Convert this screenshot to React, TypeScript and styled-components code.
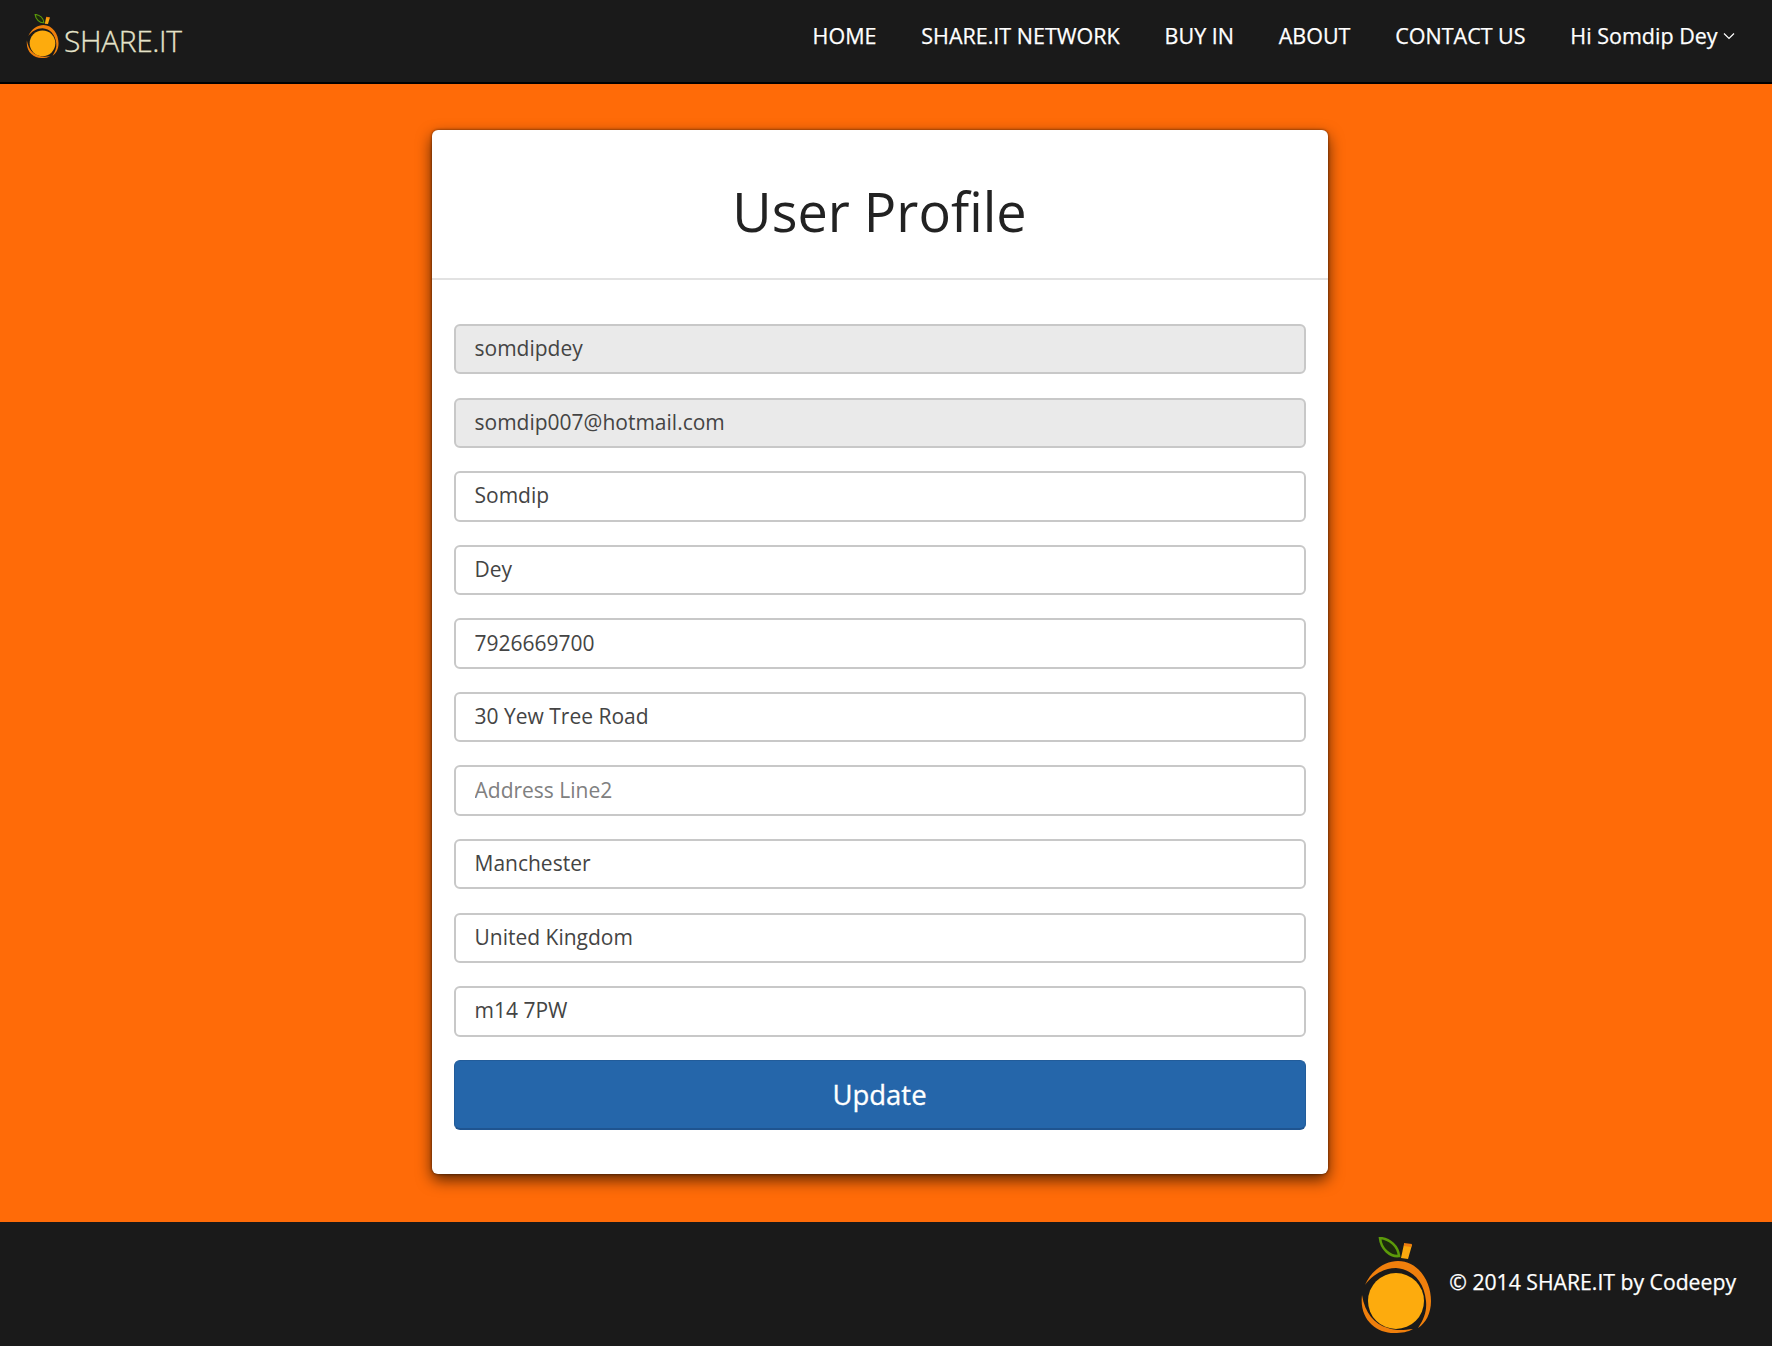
import styled, { createGlobalStyle } from "styled-components"

const GlobalStyle = createGlobalStyle`
	html, body {
		margin: 0;
		padding: 0;
		background: #ff6b08;
	}
	* {
		box-sizing: border-box;
	}
	body {
		font-family: "Open Sans", "Liberation Sans", sans-serif;
	}
`

const Page = styled.div`
	display: flex;
	flex-direction: column;
	width: 1772px;
	height: 1346px;
	overflow: hidden;
`

const TopBar = styled.header`
	display: flex;
	justify-content: space-between;
	flex: none;
	height: 84px;
	background: #1a1a1a;
	border-bottom: 2px solid #000;
	padding: 14px 15px 0 26px;
`

const Brand = styled.a`
	display: flex;
	align-items: flex-start;
	gap: 5px;
`

const BrandName = styled.span`
	font-weight: 300;
	font-size: 30px;
	line-height: 40px;
	margin-top: 7px;
	letter-spacing: -0.4px;
	-webkit-text-stroke: 0.3px #e5e3c9;
	color: #e5e3c9;
`

const Nav = styled.nav`
	display: flex;
	align-items: flex-start;
`

const NavLink = styled.a`
	display: flex;
	align-items: center;
	gap: 5px;
	padding: 0 22.4px;
	font-size: 21.5px;
	line-height: 44px;
	-webkit-text-stroke: 0.25px #fff;
	color: #fff;
	text-transform: ${(props: { $plain?: boolean }) => (props.$plain ? "none" : "uppercase")};
`

const Main = styled.main`
	flex: 1;
	display: flex;
	justify-content: center;
	align-items: flex-start;
	padding: 46px 13px 0 0;
`

const Card = styled.section`
	width: 896px;
	height: 1044px;
	background: #fff;
	border-radius: 6px;
	box-shadow:
		0 0 3px rgba(0, 0, 0, 0.6),
		0 6px 15px rgba(0, 0, 0, 0.65);
`

const CardHeader = styled.div`
	height: 150px;
	border-bottom: 2px solid #e2e2e2;
	display: flex;
	justify-content: center;
	align-items: center;
`

const Title = styled.h1`
	margin: 14px 0 0;
	font-size: 54px;
	font-weight: 400;
	color: #222;
`

const Form = styled.form`
	display: flex;
	flex-direction: column;
	gap: 23.2px;
	padding: 44px 22px 0;
`

const Field = styled.input`
	display: block;
	width: 100%;
	height: 50.4px;
	padding: 0 19px 2px;
	font-family: inherit;
	font-size: 21px;
	color: #444;
	background: #fff;
	border: 2px solid #c8c8c8;
	border-radius: 6px;
	outline: none;

	&::placeholder {
		color: #808080;
		opacity: 1;
	}

	&:disabled {
		background: #eaeaea;
		color: #444;
		opacity: 1;
	}
`

const UpdateButton = styled.button`
	height: 70px;
	font-family: inherit;
	font-size: 27.5px;
	-webkit-text-stroke: 0.3px #fff;
	color: #fff;
	background: #2566aa;
	border: 1px solid #225c9a;
	border-bottom: 2px solid #1f5490;
	border-radius: 6px;
`

const Footer = styled.footer`
	flex: none;
	height: 124px;
	background: #1a1a1a;
	display: flex;
	justify-content: flex-end;
	align-items: flex-start;
	gap: 17px;
	padding: 15px 36px 0 0;
`

const Copyright = styled.p`
	margin: 30px 0 0;
	font-size: 21.2px;
	line-height: 30px;
	-webkit-text-stroke: 0.25px #fff;
	color: #fff;
`

const OrangeLogo = ({ width }: { width: number }) => (
	<svg width={width} height={(width * 96) / 72} viewBox="0 0 72 96" aria-hidden="true">
		<path
			d="M20 1 C30 2 38 9 39 19 C30 20 21 12 20 1 Z"
			fill="#1c2a0c"
			stroke="#5b9a0a"
			strokeWidth="2.6"
		/>
		<path d="M44 7 L52 8 L48 22 L41 21 Z" fill="#f9a70e" />
		<path d="M44 6 L52 7 L51 10 L44 9 Z" fill="#ee7d0e" />
		<path
			d="M5 48 C12 32 26 24 38 24 C58 24 71 44 71 64 C71 76 66 86 58 91 C64 82 67 74 66 64 C64 44 52 32 36 31 C24 31 12 38 5 48 Z"
			fill="#ef7f0c"
		/>
		<path
			d="M2 58 C-1 82 16 96 34 96 C42 96 48 95 53 92 C44 93 36 94 28 91 C14 87 5 76 2 58 Z"
			fill="#ef7f0c"
		/>
		<circle cx="36" cy="64" r="28" fill="#fdab0d" />
	</svg>
)

const Chevron = () => (
	<svg width="12" height="8" viewBox="0 0 12 8" fill="none" aria-hidden="true">
		<path d="M1 1.5 L6 6.5 L11 1.5" stroke="#fff" strokeWidth="1.2" />
	</svg>
)

const navItems = ["Home", "Share.it Network", "Buy In", "About", "Contact Us"]

const fields = [
	{ value: "somdipdey", disabled: true },
	{ value: "somdip007@hotmail.com", disabled: true },
	{ value: "Somdip" },
	{ value: "Dey" },
	{ value: "7926669700" },
	{ value: "30 Yew Tree Road" },
	{ placeholder: "Address Line2" },
	{ value: "Manchester" },
	{ value: "United Kingdom" },
	{ value: "m14 7PW" },
]

const App = () => {
	return (
		<Page>
			<GlobalStyle />
			<TopBar>
				<Brand>
					<OrangeLogo width={33} />
					<BrandName>SHARE.IT</BrandName>
				</Brand>
				<Nav>
					{navItems.map((item) => (
						<NavLink key={item}>{item}</NavLink>
					))}
					<NavLink $plain>
						Hi Somdip Dey
						<Chevron />
					</NavLink>
				</Nav>
			</TopBar>
			<Main>
				<Card>
					<CardHeader>
						<Title>User Profile</Title>
					</CardHeader>
					<Form>
						{fields.map((field, i) => (
							<Field key={i} readOnly {...field} />
						))}
						<UpdateButton type="button">Update</UpdateButton>
					</Form>
				</Card>
			</Main>
			<Footer>
				<OrangeLogo width={72} />
				<Copyright>© 2014 SHARE.IT by Codeepy</Copyright>
			</Footer>
		</Page>
	)
}

export default App
